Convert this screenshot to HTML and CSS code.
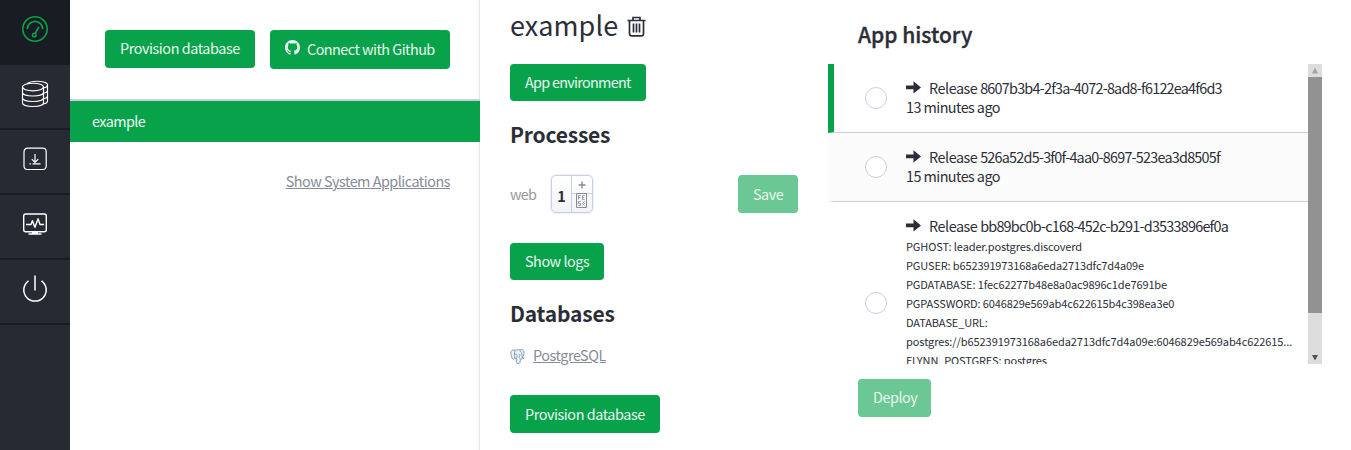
FILE: index.html
```html
<!DOCTYPE html>
<html lang="en">
<head>
<meta charset="utf-8">
<title>example</title>
<link rel="stylesheet" href="styles.css">
</head>
<body>
<div class="app">
  <nav class="sidebar">
    <a class="nav-item active"><svg width="28" height="28" viewBox="0 0 28 28" fill="none" stroke="currentColor" stroke-width="1.6"><circle cx="14" cy="14" r="12.2"/><path d="M6.3 14a7.7 7.7 0 0 1 15.4 0M17.9 11.8l-3.600 6.400" stroke-width="1.7"/><circle cx="13.3" cy="20" r="1.8" stroke-width="1.5"/></svg></a>
    <a class="nav-item"><svg width="28" height="28" viewBox="0 0 28 28" fill="none" stroke="currentColor" stroke-width="1.15"><ellipse cx="12" cy="7" rx="10.5" ry="3.8"/><path d="M1.500 7v16c0 2.100 4.700 3.500 10.500 3.500s10.500-1.400 10.500-3.500V7M1.500 12.500c0 2.100 4.700 3.500 10.500 3.500s10.500-1.400 10.500-3.500M1.500 18c0 2.100 4.700 3.500 10.500 3.500s10.500-1.400 10.500-3.500M6 3.800c2.300-2 6-2.600 10-2.600 5.800 0 10.500 1.500 10.500 3.500v16c0 1.700-1.500 2.900-4 3.300M26.500 4.700c0 1.700-1.500 2.900-4 3.300M26.500 10c0 1.700-1.500 2.900-4 3.300M26.500 15.500c0 1.700-1.500 2.900-4 3.300"/></svg></a>
    <a class="nav-item"><svg width="28" height="28" viewBox="0 0 28 28" fill="none" stroke="currentColor" stroke-width="1.2"><rect x="3" y="3.200" width="22.200" height="21.300" rx="3.500"/><path d="M14 9v8.300M10.800 14.200l3.200 3.200 3.200-3.200M11.500 18.900h8M8.500 18.900h1.500"/></svg></a>
    <a class="nav-item"><svg width="28" height="28" viewBox="0 0 28 28" fill="none" stroke="currentColor" stroke-width="1.4"><rect x="2.700" y="4" width="22.600" height="17.800" rx="2"/><path d="M5 14.500h5l1.400-3.800 2.500 6.600 3.200-8.500 1.900 5.700h4M11 22.800h6M7.500 24h13" stroke-linejoin="round"/></svg></a>
    <a class="nav-item"><svg width="28" height="28" viewBox="0 0 28 28" fill="none" stroke="currentColor" stroke-width="1.5"><path d="M14 .5v15M7.500 5.800a11.200 11.200 0 1 0 13 0"/></svg></a>
  </nav>

  <section class="apps">
    <header class="apps-header">
      <a class="btn w150 header-btn">Provision database</a>
      <a class="btn github"><svg class="octocat" width="15" height="15" viewBox="0 0 16 16" fill="currentColor"><path d="M8 0C3.580 0 0 3.580 0 8c0 3.540 2.290 6.530 5.470 7.590.4.070.55-.17.55-.38 0-.19-.01-.82-.01-1.490-2.010.37-2.530-.49-2.690-.94-.09-.23-.48-.94-.82-1.130-.28-.15-.68-.52-.01-.53.63-.01 1.080.58 1.230.82.72 1.210 1.870.87 2.330.66.070-.52.28-.87.51-1.070-1.780-.2-3.640-.89-3.640-3.950 0-.87.31-1.590.82-2.150-.08-.2-.36-1.020.08-2.120 0 0 .67-.21 2.200.82.64-.18 1.320-.27 2-.27s1.360.09 2 .27c1.530-1.040 2.200-.82 2.200-.82.44 1.100.16 1.920.08 2.120.51.56.82 1.270.82 2.150 0 3.070-1.870 3.750-3.650 3.950.29.25.54.73.54 1.480 0 1.070-.01 1.930-.01 2.200 0 .21.15.46.55.38A8.010 8.010 0 0 0 16 8c0-4.420-3.580-8-8-8z"/></svg><span>Connect with Github</span></a>
    </header>
    <a class="app-row">example</a>
    <a class="system-link">Show System Applications</a>
  </section>

  <section class="detail">
    <h1 class="title"><span>example</span><svg class="trash" width="19" height="21" viewBox="0 0 19 21" fill="none" stroke="currentColor" stroke-width="1.7"><path d="M.5 4.500h18M6 4.200V1.500h7v2.700M2.500 4.500v13.200q0 2.200 2.200 2.200h9.600q2.200 0 2.200-2.200V4.500M6.500 7.500v9M9.500 7.500v9M12.500 7.500v9"/></svg></h1>
    <a class="btn env">App environment</a>
    <h2 class="heading processes">Processes</h2>
    <div class="process">
      <span class="process-name">web</span>
      <div class="stepper">
        <span class="count">1</span>
        <div class="steps">
          <span class="step"><svg width="8" height="8" viewBox="0 0 8 8" stroke="currentColor" stroke-width="1.400"><path d="M4 .5v7M.5 4h7"/></svg></span>
          <span class="step"><svg width="11" height="15" viewBox="0 0 11 15" fill="none" stroke="currentColor" stroke-width=".8"><path d="M.5.500h10v14H.500z" stroke-width="1"/><path d="M4.800 2.500h-2.300v4M2.500 4.500h1.800M8.700 2.500H6.500v4h2.200M6.500 4.500h1.800M4.700 8.500H2.500v2h2v2H2.300M6.500 8.500l2 2-2 2M8.500 8.500l-2 2 2 2"/></svg></span>
        </div>
      </div>
      <a class="btn disabled save">Save</a>
    </div>
    <a class="btn logs">Show logs</a>
    <h2 class="heading databases">Databases</h2>
    <div class="db"><svg class="elephant" width="15" height="16" viewBox="0 0 15 16" fill="#eef3f8" stroke="#7797b0" stroke-width=".9"><path d="M5.200 1.300C2.500.3.700 1.500.8 4c.1 2.300 1.100 5.300 2.100 6.200.7.600 1.400-.2 2.100-1 .3.600.8.700 1.200.8l.3 3.200c.2 1.900 2.900 2 3.500.2l.5-3.600c1.400.2 3.100 0 3.700-.9-1 .1-1.600 0-1.900-.3 1.100-1.700 1.900-4.200 1.800-5.800C13.900.7 11.600.4 9.400 1 8 .6 6.500.7 5.200 1.300zM5.200 1.300C3.900 3.600 4.600 6.500 5 9.200M9.400 1c1.800 1.300 2.700 3.800 2.500 5.800l.4 1.800M5 5.400c1.700-.8 2.500.2 2.100 1.800L6.200 10M9.600 9.400c-.7-1.500.4-2.300.2-4.400"/></svg><a class="db-link">PostgreSQL</a></div>
    <a class="btn w150 provision">Provision database</a>
  </section>

  <section class="history">
    <h2 class="history-title">App history</h2>
    <div class="history-box">
      <ul class="releases">
        <li class="release current"><i class="radio"></i><div class="info">
          <div class="line"><svg class="arrow" width="15" height="13" viewBox="0 0 15 13"><path d="M0 4.500h7.500V.2L15 6.400l-7.500 6.200V8.200H0z" fill="currentColor"/></svg><span>Release <span class="uuid">8607b3b4-2f3a-4072-8ad8-f6122ea4f6d3</span></span></div>
          <div class="ago">13 minutes ago</div></div></li>
        <li class="release alt"><i class="radio"></i><div class="info">
          <div class="line"><svg class="arrow" width="15" height="13" viewBox="0 0 15 13"><path d="M0 4.500h7.500V.2L15 6.400l-7.500 6.200V8.200H0z" fill="currentColor"/></svg><span>Release <span class="uuid">526a52d5-3f0f-4aa0-8697-523ea3d8505f</span></span></div>
          <div class="ago">15 minutes ago</div></div></li>
        <li class="release tall"><i class="radio"></i><div class="info">
          <div class="line"><svg class="arrow" width="15" height="13" viewBox="0 0 15 13"><path d="M0 4.500h7.500V.2L15 6.400l-7.500 6.200V8.200H0z" fill="currentColor"/></svg><span>Release <span class="uuid">bb89bc0b-c168-452c-b291-d3533896ef0a</span></span></div>
          <div class="env-vars">
            <div>PGHOST: leader.postgres.discoverd</div>
            <div>PGUSER: b652391973168a6eda2713dfc7d4a09e</div>
            <div>PGDATABASE: 1fec62277b48e8a0ac9896c1de7691be</div>
            <div>PGPASSWORD: 6046829e569ab4c622615b4c398ea3e0</div>
            <div>DATABASE_URL:</div>
            <div class="url">postgres://b652391973168a6eda2713dfc7d4a09e:6046829e569ab4c622615...</div>
            <div>FLYNN_POSTGRES: postgres</div>
          </div></div></li>
      </ul>
      <div class="scrollbar">
        <svg class="up" width="14" height="13" viewBox="0 0 14 13"><path d="M7 3.500l3 6H4z" fill="#a3a3a3"/></svg>
        <div class="thumb"></div>
        <svg class="down" width="14" height="13" viewBox="0 0 14 13"><path d="M7 9.500l3-5.500H4z" fill="#505050"/></svg>
      </div>
    </div>
    <a class="btn disabled deploy">Deploy</a>
  </section>
</div>
</body>
</html>
```
FILE: styles.css
```css
* { box-sizing: border-box; }
body {
  margin: 0;
  height: 450px;
  overflow: hidden;
  background: #fff;
  color: #2b2e37;
  font: 14.4px/19px "Noto Sans CJK SC", "Noto Sans", sans-serif;
  letter-spacing: -0.46px;
}
h1, h2, ul { margin: 0; padding: 0; list-style: none; }
svg { display: block; flex: none; }
.app { display: flex; height: 450px; }

.sidebar { width: 70px; background: #272a33; color: #fff; }
.nav-item {
  display: flex;
  justify-content: center;
  height: 65px;
  padding-top: 15px;
  border-bottom: 2px solid #1a1c24;
}
.nav-item.active { background: #1a1c24; color: #08a24b; }

.btn {
  display: flex;
  align-items: center;
  height: 38px;
  padding: 0 0 2px 15px;
  background: #08a24b;
  color: #e9f7ef;
  border-radius: 4px;
  white-space: nowrap;
}
.btn.disabled { background: #6bc793; }
.w150 { width: 150px; letter-spacing: -0.43px; }
.header-btn { padding-bottom: 3px; }

.apps {
  width: 410px;
  display: flex;
  flex-direction: column;
  box-shadow: inset -1px 0 #e6e7ed, inset -2px 0 #f8f8fa;
}
.apps-header {
  display: flex;
  justify-content: flex-end;
  gap: 15px;
  height: 101px;
  padding: 30px 30px 0;
  border-bottom: 2px solid #c9cfdf;
}
.github { width: 180px; height: 39px; gap: 7px; letter-spacing: -0.53px; }
.octocat { margin-top: -2px; }
.app-row { height: 41px; padding: 10px 22px; background: #08a24b; color: #f0faf4; letter-spacing: -0.6px; }
.system-link { align-self: flex-end; margin: 29px 30px 0; color: #868b99; text-decoration: underline; letter-spacing: -0.5px; }

.detail { width: 348px; padding: 0 30px; }
.title {
  display: flex;
  align-items: center;
  gap: 8.5px;
  height: 64px;
  padding-bottom: 16px;
  font-size: 27px;
  font-weight: 400;
  letter-spacing: 0.12px;
}
.trash { margin-top: 5px; }
.env { width: 136px; height: 37px; letter-spacing: -0.72px; }
.heading { font-size: 21px; line-height: 28px; font-weight: 700; letter-spacing: -0.2px; }
.processes { margin-top: 19px; }
.process { display: flex; align-items: center; height: 38px; width: 288px; margin-top: 27px; }
.process-name { width: 41px; padding-bottom: 2px; color: #999; letter-spacing: -0.7px; }
.stepper {
  display: flex;
  width: 42px;
  height: 38px;
  border: 1px solid #c9cfe2;
  border-radius: 5px;
  background: linear-gradient(#fff, #f2f3f5);
  box-shadow: 0 0 2px #c9cfe2;
}
.count { width: 20px; padding-top: 10px; text-align: center; font-weight: 700; letter-spacing: 0; border-right: 1px solid #c9cfe2; }
.steps { flex: 1; color: #858a9b; }
.step { display: flex; align-items: center; justify-content: center; height: 17px; padding-right: 1px; }
.step + .step { border-top: 1px solid #c9cfe2; align-items: flex-start; }
.step + .step svg { margin-top: -1px; }
.save { width: 60px; margin-left: auto; }
.logs { width: 94px; height: 37px; margin-top: 30px; }
.databases { margin-top: 19px; }
.db { display: flex; align-items: center; gap: 8px; margin-top: 18px; height: 19px; }
.elephant { margin-top: 4px; }
.db-link { color: #868b99; text-decoration: underline; }
.provision { margin-top: 31px; }

.history { width: 494px; }
.history-title {
  height: 64px;
  padding: 20px 0 0 30px;
  font-size: 21px;
  line-height: 28px;
  font-weight: 500;
  letter-spacing: 0;
  -webkit-text-stroke: 0.35px currentColor;
}
.history-box { display: flex; height: 300px; overflow: hidden; }
.releases { width: 480px; }
.release {
  display: flex;
  align-items: center;
  gap: 19px;
  height: 69px;
  padding-left: 31px;
  border-left: 6px solid transparent;
  border-bottom: 1px solid #c9cfe2;
}
.release.current { border-left-color: #08a24b; }
.release.alt { background: #fbfbfb; }
.release.tall { height: 203px; }
.radio { flex: none; width: 22px; height: 22px; border: 1px solid #c9cfe2; border-radius: 50%; background: #fff; }
.info { white-space: nowrap; padding-bottom: 2px; }
.tall .info { height: 174px; }
.line { display: flex; gap: 8px; }
.uuid { letter-spacing: -0.77px; }
.ago { letter-spacing: -0.57px; }
.arrow { margin-top: 3px; }
.env-vars { font-size: 11px; padding-top: 2px; letter-spacing: -0.13px; }
.url { letter-spacing: -0.08px; }
.scrollbar { width: 14px; display: flex; flex-direction: column; background: #dcdcdc; }
.thumb { height: 236px; background: #929292; }
.down { margin-top: auto; }
.deploy { width: 73px; margin: 15px 0 0 30px; padding-bottom: 3px; }
```
